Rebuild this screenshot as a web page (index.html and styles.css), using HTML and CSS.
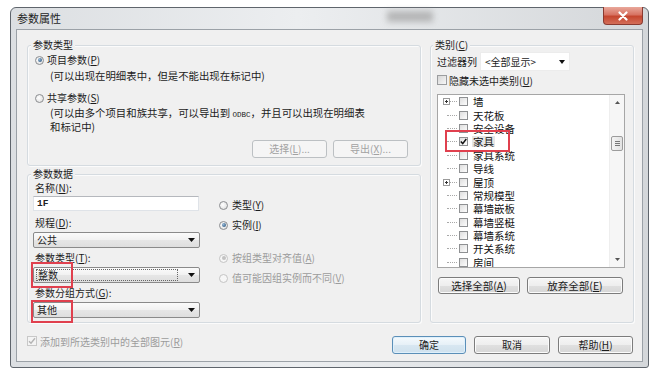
FILE: index.html
```html
<!DOCTYPE html>
<html lang="zh-CN">
<head>
<meta charset="utf-8">
<title>参数属性</title>
<link rel="stylesheet" href="styles.css">
</head>
<body>
<div class="window">
  <div class="titlebar">
    <span class="title">参数属性</span>
    <span class="smudge"></span>
    <span class="close"><svg width="12" height="10" viewBox="0 0 12 10"><path d="M2.5 1.5 L9.5 8.5 M9.5 1.5 L2.5 8.5" stroke="#fff" stroke-width="2.2" stroke-linecap="round"/></svg></span>
  </div>
  <div class="client">
    <div class="main">
      <div class="leftcol">
        <div class="group g1">
          <div class="gtitle">参数类型</div>
          <div class="opt o1"><span class="radio on"></span><span>项目参数(<u>P</u>)</span></div>
          <div class="desc d1">(可以出现在明细表中，但是不能出现在标记中)</div>
          <div class="opt o2"><span class="radio"></span><span>共享参数(<u>S</u>)</span></div>
          <div class="desc d2">(可以由多个项目和族共享，可以导出到 <span class="mono">ODBC</span>，并且可以出现在明细表<br>和标记中)</div>
          <div class="btnrow">
            <button class="btn dis w75">选择(<u>L</u>)...</button>
            <button class="btn dis w75">导出(<u>X</u>)...</button>
          </div>
        </div>
        <div class="group g2">
          <div class="gtitle">参数数据</div>
          <div class="datarow">
            <div class="fields">
              <div class="lbl l1">名称(<u>N</u>):</div>
              <div class="input">1F</div>
              <div class="lbl l2">规程(<u>D</u>):</div>
              <div class="combo">
                <span class="val">公共</span>
                <svg class="arr" width="7" height="4" viewBox="0 0 7 4"><path d="M0 0H7L3.5 4Z" fill="#111"/></svg>
              </div>
              <div class="lbl l3">参数类型(<u>T</u>):</div>
              <div class="combo">
                <span class="val focus">整数</span>
                <svg class="arr" width="7" height="4" viewBox="0 0 7 4"><path d="M0 0H7L3.5 4Z" fill="#111"/></svg>
                <span class="redbox rb1"></span>
              </div>
              <div class="lbl l4">参数分组方式(<u>G</u>):</div>
              <div class="combo">
                <span class="val">其他</span>
                <svg class="arr" width="7" height="4" viewBox="0 0 7 4"><path d="M0 0H7L3.5 4Z" fill="#111"/></svg>
                <span class="redbox rb2"></span>
              </div>
            </div>
            <div class="radios">
              <div class="opt r1"><span class="radio"></span><span>类型(<u>Y</u>)</span></div>
              <div class="opt r2"><span class="radio on"></span><span>实例(<u>I</u>)</span></div>
              <div class="opt r3 disabled"><span class="radio on dis"></span><span>按组类型对齐值(<u>A</u>)</span></div>
              <div class="opt r4 disabled"><span class="radio dis"></span><span>值可能因组实例而不同(<u>V</u>)</span></div>
            </div>
          </div>
        </div>
      </div>
      <div class="group g3">
        <div class="gtitle">类别(<u>C</u>)</div>
        <div class="frow">
          <span class="flabel">过滤器列</span>
          <div class="wcombo">
            <span class="val">&lt;全部显示&gt;</span>
            <svg class="arr" width="6" height="4" viewBox="0 0 6 4"><path d="M0 0H6L3 4Z" fill="#111"/></svg>
          </div>
        </div>
        <div class="crow"><span class="cbox"></span><span>隐藏未选中类别(<u>U</u>)</span></div>
        <div class="list">
          <div class="tree">
            <div class="row"><span class="exp"><span class="plus"><svg width="7" height="7" viewBox="0 0 7 7"><rect x="0.5" y="0.5" width="6" height="6" fill="#fff" stroke="#9a9a9a"/><path d="M2 3.5H5M3.5 2V5" stroke="#333"/></svg></span><span class="ln short"></span></span><span class="tbox"></span><span class="tx">墙</span></div>
            <div class="row"><span class="exp"><span class="ln"></span></span><span class="tbox"></span><span class="tx">天花板</span></div>
            <div class="row"><span class="exp"><span class="ln"></span></span><span class="tbox"></span><span class="tx">安全设备</span></div>
            <div class="row"><span class="exp"><span class="ln"></span></span><span class="tbox"><svg width="7" height="7" viewBox="0 0 7 7"><path d="M0.8 3.6 L2.7 5.6 L6.3 1" stroke="#111" stroke-width="1.5" fill="none"/></svg></span><span class="tx sel">家具</span></div>
            <div class="row"><span class="exp"><span class="ln"></span></span><span class="tbox"></span><span class="tx">家具系统</span></div>
            <div class="row"><span class="exp"><span class="ln"></span></span><span class="tbox"></span><span class="tx">导线</span></div>
            <div class="row"><span class="exp"><span class="plus"><svg width="7" height="7" viewBox="0 0 7 7"><rect x="0.5" y="0.5" width="6" height="6" fill="#fff" stroke="#9a9a9a"/><path d="M2 3.5H5M3.5 2V5" stroke="#333"/></svg></span><span class="ln short"></span></span><span class="tbox"></span><span class="tx">屋顶</span></div>
            <div class="row"><span class="exp"><span class="ln"></span></span><span class="tbox"></span><span class="tx">常规模型</span></div>
            <div class="row"><span class="exp"><span class="ln"></span></span><span class="tbox"></span><span class="tx">幕墙嵌板</span></div>
            <div class="row"><span class="exp"><span class="ln"></span></span><span class="tbox"></span><span class="tx">幕墙竖梃</span></div>
            <div class="row"><span class="exp"><span class="ln"></span></span><span class="tbox"></span><span class="tx">幕墙系统</span></div>
            <div class="row"><span class="exp"><span class="ln"></span></span><span class="tbox"></span><span class="tx">开关系统</span></div>
            <div class="row"><span class="exp"><span class="ln"></span></span><span class="tbox"></span><span class="tx">房间</span></div>
          </div>
          <div class="sbar">
            <span class="sbtn"><svg width="5" height="3" viewBox="0 0 5 3"><path d="M0 3H5L2.5 0Z" fill="#555"/></svg></span>
            <span class="sgap"></span>
            <span class="thumb"><svg width="5" height="5" viewBox="0 0 5 5"><path d="M0 0.5H5M0 2.5H5M0 4.5H5" stroke="#777"/></svg></span>
            <span class="sfill"></span>
            <span class="sbtn"><svg width="5" height="3" viewBox="0 0 5 3"><path d="M0 0H5L2.5 3Z" fill="#555"/></svg></span>
          </div>
          <span class="redbox rb3"></span>
        </div>
        <div class="lbtns">
          <button class="btn w82">选择全部(<u>A</u>)</button>
          <button class="btn w96">放弃全部(<u>E</u>)</button>
        </div>
      </div>
    </div>
    <div class="bottom">
      <div class="chk-lbl"><span class="cbox dis"><svg width="8" height="8" viewBox="0 0 8 8"><path d="M1 4.2 L3 6.3 L7 1.2" stroke="#b4b4b4" stroke-width="1.4" fill="none"/></svg></span><span>添加到所选类别中的全部图元(<u>R</u>)</span></div>
      <div class="bbtns">
        <button class="btn def w74">确定</button>
        <button class="btn w76">取消</button>
        <button class="btn w75">帮助(<u>H</u>)</button>
      </div>
    </div>
  </div>
</div>
</body>
</html>
```

FILE: styles.css
```css
* { box-sizing: border-box; }
html, body { margin: 0; padding: 0; background: #fff; }
body {
  font-family: "Noto Sans CJK SC", "Noto Sans", sans-serif;
  font-size: 10px;
  color: #1c1c1c;
}
u { text-decoration-thickness: 1px; text-underline-offset: 1px; }

.window {
  margin: 7px 0 0 10px;
  width: 639px;
  height: 361px;
  border: 1px solid #5f656c;
  border-radius: 6px 6px 3px 3px;
  background: linear-gradient(to right, #dcdfe2, #eceef0 45%, #d4d7da);
  padding: 0 5px 5px;
  display: flex;
  flex-direction: column;
}
.titlebar {
  height: 21px;
  flex: none;
  display: flex;
  align-items: flex-start;
  position: relative;
}
.title {
  font-size: 11px;
  line-height: 12px;
  margin: 4px 0 0 1px;
  color: #1e1e1e;
}
.smudge {
  position: absolute;
  left: 371px;
  top: 3px;
  width: 46px;
  height: 11px;
  background: #9c9c9c;
  filter: blur(3px);
  opacity: 0.65;
}
.close {
  margin-left: auto;
  margin-top: -1px;
  width: 40px;
  height: 18px;
  border: 1px solid #8a3a30;
  border-top: none;
  border-radius: 0 0 4px 4px;
  background: linear-gradient(#e9a89b, #d77363 45%, #c5462f 55%, #d36e59);
  display: flex;
  align-items: center;
  justify-content: center;
}

.client {
  flex: 1;
  border: 1px solid #9ba1a7;
  background: #f0f0f0;
  padding: 15px 8px 0 10px;
  display: flex;
  flex-direction: column;
}
.main {
  display: flex;
  gap: 9px;
  height: 278px;
}
.leftcol {
  width: 394px;
  display: flex;
  flex-direction: column;
}
.group {
  border: 1px solid #d5dbe0;
  border-radius: 3px;
  box-shadow: inset 1px 1px 0 #fbfbfb, 1px 1px 0 #fbfbfb;
}
.gtitle {
  margin-top: -7px;
  height: 12px;
  line-height: 12px;
  padding: 0 2px;
  background: #f0f0f0;
  width: max-content;
}

.g1 { padding: 0 12px 7px 7px; }
.g1 .gtitle { margin-left: -4px; }
.opt {
  display: flex;
  align-items: center;
  gap: 3px;
  height: 12px;
  line-height: 12px;
  white-space: nowrap;
}
.o1 { margin-top: 3px; }
.o2 { margin-top: 10px; }
.desc { padding-left: 15px; white-space: nowrap; font-size: 10.4px; }
.d1 { margin-top: 4px; line-height: 12px; height: 12px; }
.d2 { margin-top: 3px; line-height: 11px; height: 22px; }
.mono { font-family: "Liberation Mono", monospace; font-size: 7.5px; }
.btnrow {
  margin-top: 11px;
  display: flex;
  justify-content: flex-end;
  gap: 6px;
}

.radio {
  width: 9px;
  height: 9px;
  flex: none;
  border-radius: 50%;
  border: 1px solid #8b8d90;
  background: radial-gradient(circle at 40% 40%, #ffffff, #d9d9d9);
  position: relative;
}
.radio.on::after {
  content: "";
  position: absolute;
  left: 1.5px;
  top: 1.5px;
  width: 4px;
  height: 4px;
  border-radius: 50%;
  background: radial-gradient(circle at 35% 35%, #94b8d8, #1e4870);
}
.radio.dis { border-color: #c4c4c4; background: #f6f6f6; }
.radio.dis.on::after { background: #c2c2c2; }
.disabled { color: #9c9c9c; }

.btn {
  height: 18px;
  padding: 0;
  margin: 0;
  font: inherit;
  line-height: 16px;
  color: #1c1c1c;
  border: 1px solid #7c7c7c;
  border-radius: 3px;
  background: linear-gradient(#f6f6f6, #eeeeee 50%, #e0e0e0 50%, #d6d6d6);
  box-shadow: inset 0 0 0 1px #fbfbfb;
  display: flex;
  align-items: center;
  justify-content: center;
  white-space: nowrap;
}
.btn.dis {
  border-color: #bcc0c3;
  background: #f5f5f5;
  color: #a2a2a2;
  box-shadow: none;
}
.btn.def {
  border-color: #5b8fb8;
  background: linear-gradient(#f5fafd, #e6f0f7 50%, #d8e7f1 50%, #cfe1ee);
  box-shadow: inset 0 0 0 1px #dff0fb;
}
.w74 { width: 74px; }
.w75 { width: 75px; }
.w76 { width: 76px; }
.w82 { width: 82px; }
.w96 { width: 96px; }

.g2 { flex: 1; margin-top: 8px; padding: 0 5px; }
.g2 .gtitle { margin-left: -2px; }
.datarow { display: flex; gap: 19px; }
.fields { width: 167px; display: flex; flex-direction: column; }
.lbl { height: 12px; line-height: 12px; padding-left: 2px; white-space: nowrap; }
.l1 { margin-top: 2px; }
.l2 { margin-top: 6px; }
.l3, .l4 { margin-top: 4px; }
.input {
  margin-top: 2px;
  height: 15px;
  width: 166px;
  background: #fff;
  border: 1px solid #dfe3e8;
  border-top-color: #b5b8bd;
  padding-left: 3px;
  font-family: "Liberation Mono", monospace;
  font-size: 9.5px;
  font-weight: bold;
  line-height: 13px;
  color: #222;
}
.combo {
  margin-top: 3px;
  height: 16px;
  border: 1px solid #8a8a8a;
  border-radius: 2px;
  background: linear-gradient(#fbfbfb, #f1f1f1 50%, #e6e6e6 50%, #dedede);
  display: flex;
  align-items: center;
  padding: 0 4px 0 3px;
  position: relative;
}
.combo .val { flex: 1; line-height: 12px; }
.combo .val.focus {
  border: 1px dotted #666;
  margin: 0 10px 0 -1px;
  padding-left: 1px;
  height: 12px;
  line-height: 10px;
}
.arr { flex: none; display: block; }
.redbox {
  position: absolute;
  border: 2px solid #e0404e;
  pointer-events: none;
}
.rb1 { left: -3px; top: -6px; width: 42px; height: 26px; }
.rb2 { left: -3px; top: -3px; width: 42px; height: 23px; }
.rb3 { left: 7px; top: 35px; width: 65px; height: 22px; }

.radios { display: flex; flex-direction: column; margin-top: 19px; }
.r1 { margin-top: 0; }
.r2 { margin-top: 8px; }
.r3 { margin-top: 21px; }
.r4 { margin-top: 8px; }
.radios .opt { gap: 4px; }

.g3 {
  width: 204px;
  padding: 0 8px 0 6px;
  display: flex;
  flex-direction: column;
}
.g3 .gtitle { margin-left: -4px; }
.frow {
  margin-top: 1px;
  height: 19px;
  display: flex;
  align-items: center;
}
.flabel { width: 40px; white-space: nowrap; }
.wcombo {
  margin-left: 3px;
  width: 90px;
  height: 19px;
  background: #fff;
  border: 1px solid #ececec;
  display: flex;
  align-items: center;
  padding: 0 4px 0 4px;
}
.wcombo .val { flex: 1; }
.crow {
  margin-top: 3px;
  height: 12px;
  display: flex;
  align-items: center;
  gap: 2px;
  white-space: nowrap;
}
.cbox {
  width: 10px;
  height: 10px;
  flex: none;
  border: 1px solid #9b9d9f;
  background: linear-gradient(135deg, #d6d6d6, #f7f7f7);
  display: flex;
  align-items: center;
  justify-content: center;
}
.cbox.dis { border-color: #c8c8c8; background: #f4f4f4; }

.list {
  margin-top: 8px;
  height: 174px;
  border: 1px solid #a6a6a6;
  background: #fff;
  display: flex;
  position: relative;
  overflow: hidden;
}
.tree { flex: 1; overflow: hidden; }
.row {
  height: 13.4px;
  display: flex;
  align-items: center;
  font-size: 10.5px;
  white-space: nowrap;
  color: #111;
}
.exp { width: 21px; flex: none; display: flex; align-items: center; }
.plus { width: 7px; height: 7px; margin-left: 5px; display: block; }
.plus svg { display: block; }
.ln { width: 10px; margin-left: 9px; border-top: 1px dotted #a8a8a8; height: 0; }
.ln.short { width: 7px; margin-left: 0; }
.tbox {
  width: 9px;
  height: 9px;
  flex: none;
  border: 1px solid #8e9092;
  background: linear-gradient(135deg, #dedede, #fdfdfd);
  display: flex;
  align-items: center;
  justify-content: center;
}
.tx { margin-left: 5px; line-height: 11px; }
.tx.sel { background: #e6e6e6; padding: 0 1px; margin-left: 4px; }

.sbar {
  width: 15px;
  flex: none;
  display: flex;
  flex-direction: column;
  align-items: center;
  background: #f6f6f6;
  border-left: 1px solid #eeeeee;
}
.sbtn { height: 15px; display: flex; align-items: center; justify-content: center; }
.sgap { height: 26px; }
.thumb {
  width: 12px;
  height: 15px;
  border: 1px solid #9c9c9c;
  border-radius: 2px;
  background: linear-gradient(to right, #f4f4f4, #e2e2e2);
  display: flex;
  align-items: center;
  justify-content: center;
}
.sfill { flex: 1; }

.lbtns {
  margin-top: 9px;
  padding-left: 1px;
  display: flex;
  gap: 7px;
}
.lbtns .btn { height: 17px; font-size: 10.5px; }

.bottom {
  margin-top: 13px;
  height: 18px;
  display: flex;
  padding-right: 1px;
}
.chk-lbl {
  display: flex;
  align-items: center;
  gap: 3px;
  height: 12px;
  margin-top: -1px;
  color: #9c9c9c;
  white-space: nowrap;
}
.bbtns { margin-left: auto; display: flex; gap: 8px; }
```
